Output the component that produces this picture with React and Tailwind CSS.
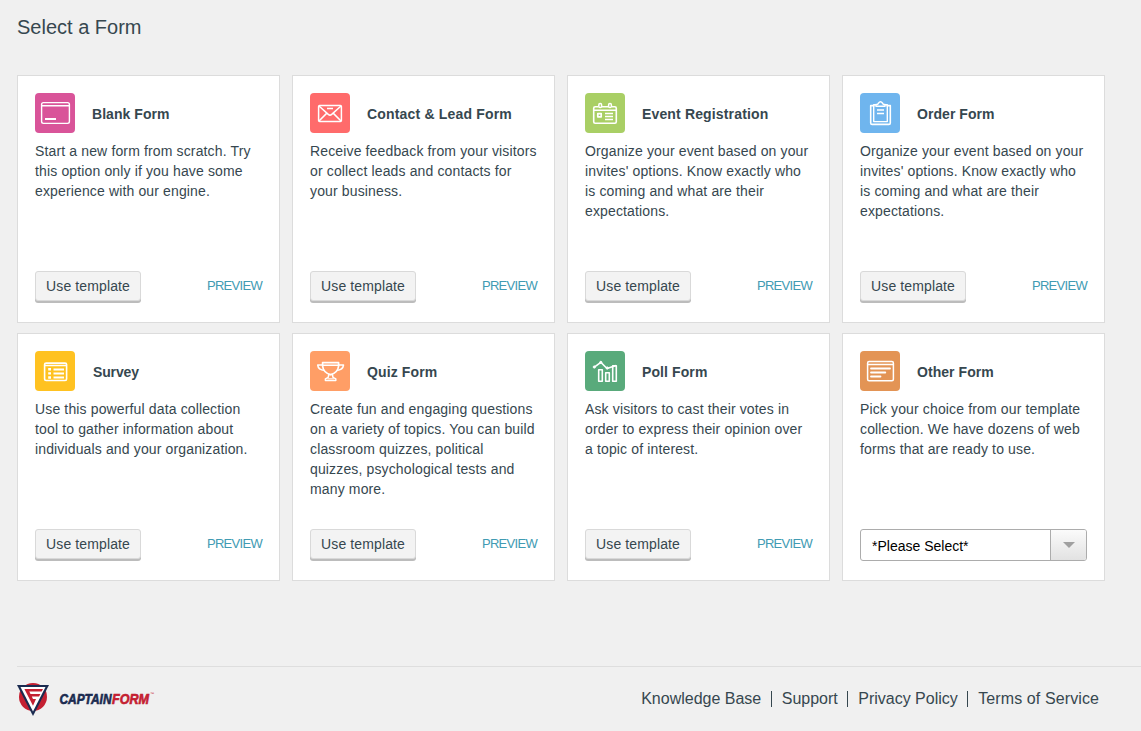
const icons = {
  blank: (
    <>
      <rect x="6.6" y="9.6" width="27.8" height="20.8" rx="1.8" strokeWidth="1.4" />
      <path d="M7 12.7H34" strokeWidth="1.4" />
      <path d="M10 26H21" strokeWidth="1.9" />
    </>
  ),
  mail: (
    <>
      <rect x="8.6" y="12.6" width="22.8" height="15.8" rx="1" strokeWidth="1.5" />
      <path d="M9 13L18.3 21.4Q20 22.8 21.7 21.4L31 13M9 28L16.6 20.4M31 28L23.4 20.4" strokeWidth="1.5" />
      <path d="M17 15.5H23" strokeWidth="1.5" />
    </>
  ),
  event: (
    <>
      <path d="M13.5 13.8H10.2Q8.7 13.8 8.7 15.3V28.8Q8.7 30.3 10.2 30.3H29.8Q31.3 30.3 31.3 28.8V15.3Q31.3 13.8 29.8 13.8H27M17 13.8H23.5M8.7 17.3H31.3" strokeWidth="1.6" />
      <rect x="13.8" y="10.6" width="2.8" height="4" rx="1.3" strokeWidth="1.5" />
      <rect x="23.6" y="10.6" width="2.8" height="4" rx="1.3" strokeWidth="1.5" />
      <rect x="12.8" y="20.6" width="3.4" height="3.2" strokeWidth="1.7" />
      <path d="M20 20.5H28M20 23.5H28M20 26.5H28" strokeWidth="1.4" />
    </>
  ),
  order: (
    <>
      <path d="M14.5 12.6H10.7V30Q10.7 31.4 12.1 31.4H28.9Q30.3 31.4 30.3 30V12.6H26.5" strokeWidth="1.6" />
      <path d="M16 11.7H13.7V28.6H27.3V11.7H25" strokeWidth="1.4" />
      <path d="M16 13.3V11.6Q18 11.6 18.4 10.2Q20.5 7.3 22.6 10.2Q23 11.6 25 11.6V13.3Z" strokeWidth="1.5" />
      <path d="M17 17H24M17 20.5H24" strokeWidth="1.5" />
    </>
  ),
  survey: (
    <>
      <rect x="9.6" y="12.1" width="22" height="17.4" rx="1.5" strokeWidth="1.6" />
      <path d="M10 14.5H31" strokeWidth="1.6" />
      <path d="M13.2 18.3H16M13.2 22.4H16M13.2 26.5H16" strokeWidth="2.4" />
      <path d="M18.5 18.5H29M18.5 22.5H29M18.5 26.5H29" strokeWidth="1.8" />
    </>
  ),
  quiz: (
    <>
      <path d="M12.6 11.7H28.6V15Q28 21.5 20.6 23.7Q13.2 21.5 12.6 15Z" strokeWidth="1.7" />
      <path d="M12.6 14.1H7.7Q8.2 18.8 14.5 19.4M28.6 14.1H33.5Q33 18.8 26.7 19.4M13 14.3H28.5" strokeWidth="1.5" />
      <path d="M18.8 23.5H22.4L23 26.4L25.8 27.8V29.4H15.4V27.8L18.2 26.4Z" strokeWidth="1.5" />
      <path d="M17.5 27.8H23.8" strokeWidth="1" />
    </>
  ),
  poll: (
    <>
      <path d="M9.3 16.1L15.8 11.3L22 17.5L31 14.5" strokeWidth="1.6" />
      <circle cx="9.3" cy="16" r="1.1" fill="white" />
      <circle cx="15.8" cy="11.4" r="1.1" fill="white" />
      <circle cx="22.2" cy="17" r="1.1" fill="white" />
      <path d="M13.7 30.3V18.7H17.3V30.3ZM20.7 30.3V21.7H24.3V30.3ZM27.7 30.3V14.7H31.3V30.3Z" strokeWidth="1.6" />
    </>
  ),
  other: (
    <>
      <rect x="7.6" y="10.6" width="25.8" height="19.1" rx="1.5" strokeWidth="1.5" />
      <path d="M8 13.5H33" strokeWidth="1.5" />
      <path d="M11 17.5H30M11 21.5H25.3M11 25.5H20.5" strokeWidth="1.8" strokeLinecap="round" />
    </>
  ),
};

const forms = [
  { icon: "blank", color: "bg-[#d95499]", title: "Blank Form", lines: ["Start a new form from scratch. Try", "this option only if you have some", "experience with our engine."] },
  { icon: "mail", color: "bg-[#ff6b6b]", title: "Contact & Lead Form", spacing: "tracking-[0.18px]", lines: ["Receive feedback from your visitors", "or collect leads and contacts for", "your business."] },
  { icon: "event", color: "bg-[#a9cf65]", title: "Event Registration", spacing: "tracking-[0.15px]", lines: ["Organize your event based on your", "invites' options. Know exactly who", "is coming and what are their", "expectations."] },
  { icon: "order", color: "bg-[#6fb5ee]", title: "Order Form", lines: ["Organize your event based on your", "invites' options. Know exactly who", "is coming and what are their", "expectations."] },
  { icon: "survey", color: "bg-[#ffc221]", title: "Survey", spacing: "tracking-[-0.15px]", gap: "gap-[18px]", lines: ["Use this powerful data collection", "tool to gather information about", "individuals and your organization."] },
  { icon: "quiz", color: "bg-[#ff9e66]", title: "Quiz Form", spacing: "tracking-[0.12px]", lines: ["Create fun and engaging questions", "on a variety of topics. You can build", "classroom quizzes, political", "quizzes, psychological tests and", "many more."] },
  { icon: "poll", color: "bg-[#59aa7b]", title: "Poll Form", spacing: "tracking-[0.1px]", lines: ["Ask visitors to cast their votes in", "order to express their opinion over", "a topic of interest."] },
  { icon: "other", color: "bg-[#e39455]", title: "Other Form", lines: ["Pick your choice from our template", "collection. We have dozens of web", "forms that are ready to use."], select: true },
];

function TemplateSelect() {
  return (
    <button className="mb-[2px] flex h-8 w-[227px] overflow-hidden rounded-[3px] border border-[#acacac] bg-white text-left">
      <span className="flex-1 pl-[11px] pt-px text-[14px] leading-[31px] text-black">*Please Select*</span>
      <span className="flex h-full w-9 items-center justify-center border-l border-[#acacac] bg-linear-to-b from-[#fbfbfb] to-[#e2e2e2]">
        <svg width="12" height="6" viewBox="0 0 12 6" fill="#a0a0a0"><path d="M0 0H12L6 6Z" /></svg>
      </span>
    </button>
  );
}

function Card({ form }) {
  return (
    <article className="flex h-[248px] flex-col border border-[#dcdcdc] bg-white p-[17px]">
      <div className={`flex h-10 items-center ${form.gap || "gap-[17px]"}`}>
        <svg className={`size-10 rounded-[4px] ${form.color}`} viewBox="0 0 40 40" fill="none" stroke="white" strokeLinejoin="round">
          {icons[form.icon]}
        </svg>
        <h2 className={`pt-[2px] text-[14px] font-bold leading-5 ${form.spacing || "tracking-[0.05px]"}`}>{form.title}</h2>
      </div>
      <p className="mt-2 whitespace-nowrap text-[14px] leading-5 tracking-[0.14px]">
        {form.lines.map((line) => <span className="block" key={line}>{line}</span>)}
      </p>
      <div className="mt-auto">
        {form.select ? <TemplateSelect /> : (
          <div className="flex h-[34px] items-start justify-between">
            <button className="h-[30px] w-[106px] rounded-[3px] border border-[#d9d9d9] bg-[#f3f3f3] text-[14px] leading-[28px] tracking-[0.12px] shadow-[0_2px_0_#bcbcbc]">Use template</button>
            <a className="pt-[5px] text-[13px] leading-5 tracking-[-0.7px] text-[#419bb3]">PREVIEW</a>
          </div>
        )}
      </div>
    </article>
  );
}

function Logo() {
  return (
    <svg width="138" height="36" viewBox="0 0 138 36">
      <circle cx="16" cy="15" r="14" fill="#c42032" />
      <path d="M0 3H32L16 34Z" fill="#1b2b50" />
      <path d="M3.5 5H28.5L16 29.5Z" fill="#fff" />
      <path d="M7.4 7H26L24.7 9.6H12.3L13.5 12H23.4L22.1 14.6H14.8L16 17H19L16 23.8Z" fill="#c42032" />
      <g fontFamily="Liberation Sans" fontSize="15.5" fontWeight="700" fontStyle="italic" strokeWidth="0.7">
        <text x="42.5" y="22.4" textLength="52" lengthAdjust="spacingAndGlyphs" fill="#1b2b50" stroke="#1b2b50">CAPTAIN</text>
        <text x="95" y="22.4" textLength="37" lengthAdjust="spacingAndGlyphs" fill="#c42032" stroke="#c42032">FORM</text>
      </g>
      <text x="133" y="13.4" fontFamily="Liberation Sans" fontSize="4" fill="#c42032">™</text>
    </svg>
  );
}

export default function App() {
  const links = [
    { text: "Knowledge Base", spacing: "" },
    { text: "Support", spacing: "" },
    { text: "Privacy Policy", spacing: "tracking-[-0.01px]" },
    { text: "Terms of Service", spacing: "tracking-[0.1px]" },
  ];
  return (
    <div className="flex h-[731px] w-[1141px] flex-col overflow-hidden bg-[#f0f0f0] pl-[17px] font-['Liberation_Sans',sans-serif] text-[#36474f]">
      <h1 className="pt-[12px] text-[20px] leading-[30px]">Select a Form</h1>
      <main className="mt-[33px] grid w-[1088px] grid-cols-4 gap-x-3 gap-y-[10px]">
        {forms.map((form) => <Card key={form.title} form={form} />)}
      </main>
      <footer className="mt-[85px] flex h-[65px] items-start justify-between border-t border-[#dedede] pt-[15px] pr-[42px]">
        <Logo />
        <nav className="flex pt-[7px] text-[16px] leading-5">
          {links.map((link, i) => (
            <span key={link.text} className="flex items-center">
              {i > 0 && <i className="-mt-px mr-[10px] ml-[9.5px] h-4 w-px bg-[#36474f]" />}
              <a className={link.spacing}>{link.text}</a>
            </span>
          ))}
        </nav>
      </footer>
    </div>
  );
}
